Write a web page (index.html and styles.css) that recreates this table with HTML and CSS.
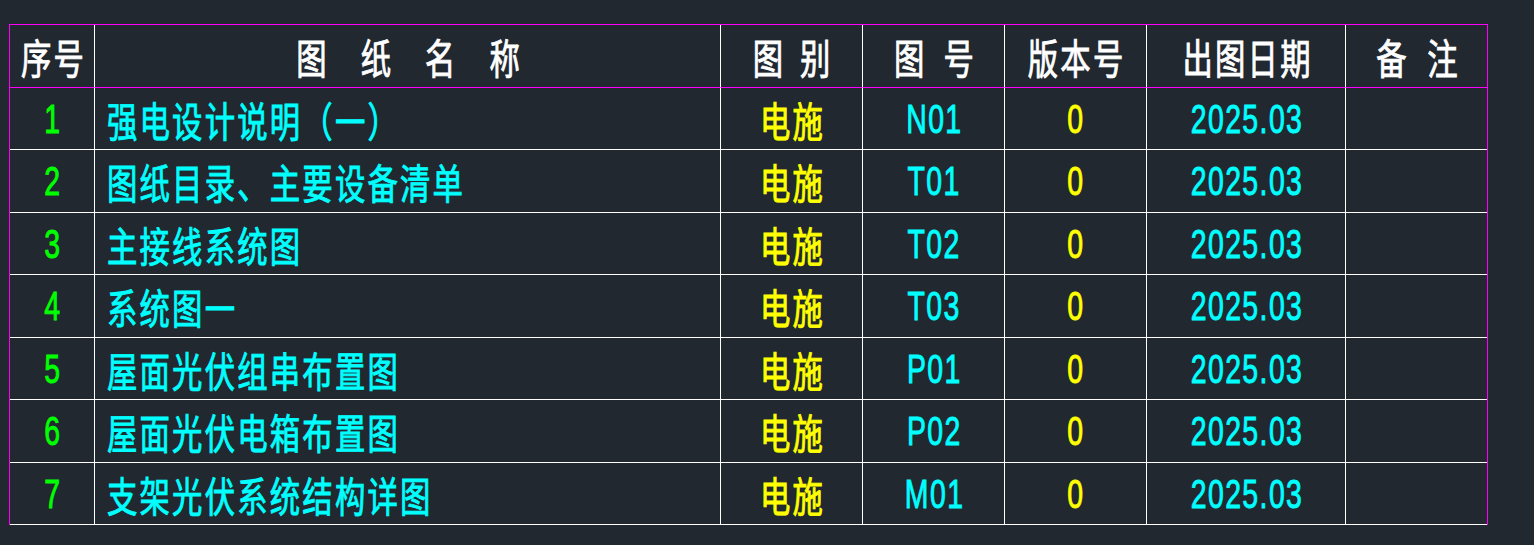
FILE: index.html
```html
<!DOCTYPE html>
<html lang="zh">
<head>
<meta charset="utf-8">
<title>图纸目录</title>
<link rel="stylesheet" href="styles.css">
</head>
<body>
<div class="sheet">
  <div class="grid">
    <div class="cell h first"><span class="t cjk ls3">序号</span></div>
    <div class="cell h"><span class="t cjk ls46">图纸名称</span></div>
    <div class="cell h"><span class="t cjk ls23">图别</span></div>
    <div class="cell h"><span class="t cjk ls26">图号</span></div>
    <div class="cell h"><span class="t cjk ls3">版本号</span></div>
    <div class="cell h"><span class="t cjk ls3">出图日期</span></div>
    <div class="cell h"><span class="t cjk ls28">备注</span></div>

    <div class="cell first"><span class="t num green">1</span></div>
    <div class="cell name"><span class="t cjk cyan">强电设计说明（一）</span></div>
    <div class="cell"><span class="t cjk yellow">电施</span></div>
    <div class="cell"><span class="t num cyan">N01</span></div>
    <div class="cell"><span class="t num yellow">0</span></div>
    <div class="cell"><span class="t num cyan">2025.03</span></div>
    <div class="cell"></div>

    <div class="cell first"><span class="t num green">2</span></div>
    <div class="cell name"><span class="t cjk cyan">图纸目录、主要设备清单</span></div>
    <div class="cell"><span class="t cjk yellow">电施</span></div>
    <div class="cell"><span class="t num cyan">T01</span></div>
    <div class="cell"><span class="t num yellow">0</span></div>
    <div class="cell"><span class="t num cyan">2025.03</span></div>
    <div class="cell"></div>

    <div class="cell first"><span class="t num green">3</span></div>
    <div class="cell name"><span class="t cjk cyan">主接线系统图</span></div>
    <div class="cell"><span class="t cjk yellow">电施</span></div>
    <div class="cell"><span class="t num cyan">T02</span></div>
    <div class="cell"><span class="t num yellow">0</span></div>
    <div class="cell"><span class="t num cyan">2025.03</span></div>
    <div class="cell"></div>

    <div class="cell first"><span class="t num green">4</span></div>
    <div class="cell name"><span class="t cjk cyan">系统图一</span></div>
    <div class="cell"><span class="t cjk yellow">电施</span></div>
    <div class="cell"><span class="t num cyan">T03</span></div>
    <div class="cell"><span class="t num yellow">0</span></div>
    <div class="cell"><span class="t num cyan">2025.03</span></div>
    <div class="cell"></div>

    <div class="cell first"><span class="t num green">5</span></div>
    <div class="cell name"><span class="t cjk cyan">屋面光伏组串布置图</span></div>
    <div class="cell"><span class="t cjk yellow">电施</span></div>
    <div class="cell"><span class="t num cyan">P01</span></div>
    <div class="cell"><span class="t num yellow">0</span></div>
    <div class="cell"><span class="t num cyan">2025.03</span></div>
    <div class="cell"></div>

    <div class="cell first"><span class="t num green">6</span></div>
    <div class="cell name"><span class="t cjk cyan">屋面光伏电箱布置图</span></div>
    <div class="cell"><span class="t cjk yellow">电施</span></div>
    <div class="cell"><span class="t num cyan">P02</span></div>
    <div class="cell"><span class="t num yellow">0</span></div>
    <div class="cell"><span class="t num cyan">2025.03</span></div>
    <div class="cell"></div>

    <div class="cell first"><span class="t num green">7</span></div>
    <div class="cell name"><span class="t cjk cyan">支架光伏系统结构详图</span></div>
    <div class="cell"><span class="t cjk yellow">电施</span></div>
    <div class="cell"><span class="t num cyan">M01</span></div>
    <div class="cell"><span class="t num yellow">0</span></div>
    <div class="cell"><span class="t num cyan">2025.03</span></div>
    <div class="cell"></div>
  </div>
</div>
</body>
</html>
```

FILE: styles.css
```css
html, body {
  margin: 0;
  background: #212830;
}

.sheet {
  padding: 24px 0 0 9px;
}

.grid {
  display: grid;
  width: max-content;
  grid-template-columns: 84px 626px 142px 142px 142px 199px 142px;
  grid-template-rows: 63px 62px 63px 62px 63px 62px 63px 62px;
  border: 1px solid #ff00ff;
  border-bottom: 0;
}

.cell {
  box-sizing: border-box;
  border-left: 1px solid #ffffff;
  border-bottom: 1px solid #ffffff;
  display: flex;
  align-items: center;
  justify-content: center;
  overflow: hidden;
}

.cell.first {
  border-left: 0;
}

.cell.h {
  border-bottom-color: #ff00ff;
  color: #ffffff;
}

.cell.name {
  justify-content: flex-start;
  padding-left: 12px;
}

.t {
  display: inline-block;
  white-space: nowrap;
  line-height: 1;
  transform-origin: center center;
  -webkit-text-stroke: 0.9px currentColor;
}

.cell.name .t {
  transform-origin: left center;
}

.cjk {
  font-family: "Noto Sans CJK SC", sans-serif;
  font-size: 41px;
  font-weight: 400;
  letter-spacing: 3px;
  transform: scaleX(0.74);
  padding-left: 3px;
  margin-top: 1px;
}

.cell.name .cjk {
  padding-left: 0;
}

.num {
  font-family: "Liberation Sans", sans-serif;
  font-size: 40px;
  font-weight: 400;
  transform: scaleX(0.71);
  letter-spacing: 2px;
  padding-left: 2px;
}

.cell.h .cjk {
  margin-top: 0;
}

.ls3 { letter-spacing: 3px; padding-left: 3px; }
.ls23 { letter-spacing: 23px; padding-left: 23px; }
.ls26 { letter-spacing: 26px; padding-left: 26px; }
.ls28 { letter-spacing: 28px; padding-left: 28px; }
.ls46 { letter-spacing: 46px; padding-left: 46px; }

.green { color: #00ff00; }
.cyan { color: #00ffff; }
.yellow { color: #ffff00; }
```
